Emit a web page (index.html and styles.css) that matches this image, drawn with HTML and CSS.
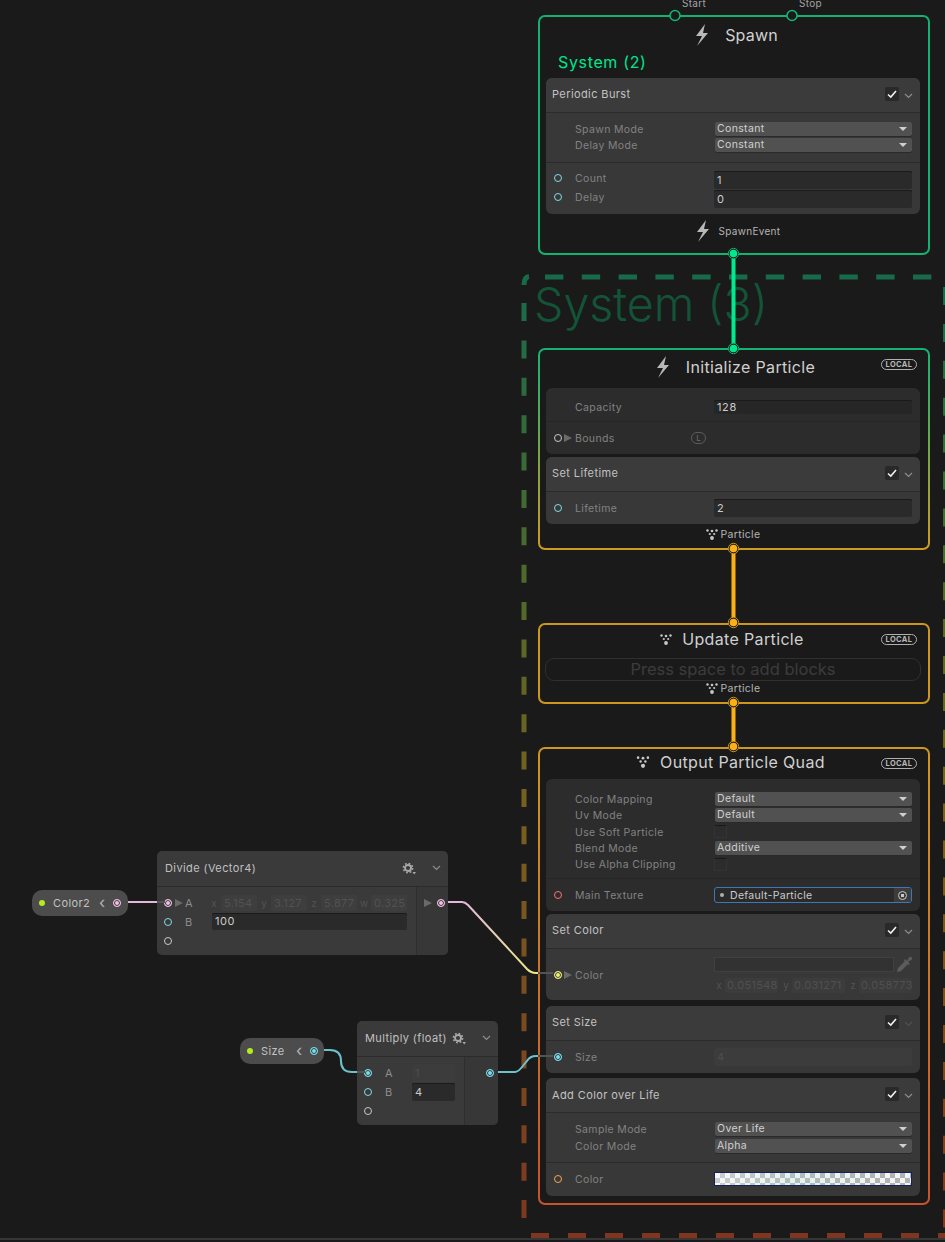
FILE: index.html
```html
<!DOCTYPE html>
<html lang="en">
<head>
    <meta charset="UTF-8">
    <meta name="viewport" content="width=device-width, initial-scale=1.0">
    <title>VFX Graph</title>
    <link rel="stylesheet" href="styles.css">
</head>
<body>
<svg class="defs">
    <symbol id="bolt" viewBox="0 0 13 22"><polygon points="10,0 1,12 7,12 2,22 13,9 8,9"/></symbol>
    <symbol id="dots" viewBox="0 0 12 11"><circle cx="1.5" cy="1.5" r="1.2"/><circle cx="6" cy="2" r="1.3"/><circle cx="10.5" cy="1.5" r="1.2"/><circle cx="3.8" cy="5" r="1.1"/><circle cx="8.2" cy="5" r="1.1"/><circle cx="6" cy="9" r="1.9"/></symbol>
    <symbol id="tick" viewBox="0 0 14 14"><path d="M3 7.5 L5.8 10 L11 4" fill="none" stroke="#f0f0f0" stroke-width="1.6"/></symbol>
    <symbol id="chev" viewBox="0 0 9 6"><path d="M1 1 L4.5 4.5 L8 1" fill="none" stroke="currentColor" stroke-width="1.2"/></symbol>
    <symbol id="gear" viewBox="0 0 14 13"><circle cx="6" cy="6" r="4.6" fill="none" stroke="#a8a8a8" stroke-width="1.6" stroke-dasharray="1.8 1.8"/><circle cx="6" cy="6" r="3" fill="none" stroke="#a8a8a8" stroke-width="1.9"/><polygon points="10.5,10 14,10 12.2,12.5" fill="#a8a8a8"/></symbol>
</svg>

<div class="graph">
    <!-- system frame and links -->
    <svg class="layer" width="945" height="1242">
        <defs>
            <linearGradient id="frame" gradientUnits="userSpaceOnUse" x1="0" y1="278" x2="0" y2="1236">
                <stop offset="0" stop-color="#176b4b"/>
                <stop offset="0.3" stop-color="#4c6a2c"/>
                <stop offset="0.55" stop-color="#77601f"/>
                <stop offset="1" stop-color="#7e3620"/>
            </linearGradient>
            <linearGradient id="pinkyellow" gradientUnits="userSpaceOnUse" x1="0" y1="902" x2="0" y2="973">
                <stop offset="0" stop-color="#e2b9d8"/>
                <stop offset="1" stop-color="#e9e88a"/>
            </linearGradient>
        </defs>
        <path class="dash" d="M545 277 H945"/>
        <path class="dash left" d="M524 303 V1220"/>
        <path class="dash right" d="M945.5 287 V1238"/>
        <path class="dash bottom" d="M531 1235.5 H945"/>
        <path class="corner" d="M524 285 Q524 277 529 276.5"/>
        <path class="wire pink" d="M125 902 H157"/>
        <path class="wire blend" d="M448 902 H462 Q465 902 468 905 L527 969 Q531 973 536 973 H538"/>
        <path class="wire teal" d="M322 1050 H330 Q341 1050 341 1061 Q341 1072 352 1072 H357"/>
        <path class="wire teal" d="M498 1072 H515 Q518 1072 522 1067 L527 1061 Q530 1056 536 1056 H538"/>
    </svg>
    <div class="sys-big">System (3)</div>

    <!-- left side operators -->
    <div class="pill pill-color">
        <span class="led"></span><span class="pill-name">Color2</span><span class="back">‹</span><span class="port pink on"></span>
    </div>
    <div class="pill pill-size">
        <span class="led"></span><span class="pill-name">Size</span><span class="back">‹</span><span class="port cyan on"></span>
    </div>

    <div class="node node-divide">
        <div class="node-head">
            <span class="node-title">Divide (Vector4)</span>
            <svg class="gear"><use href="#gear"/></svg>
            <svg class="chev"><use href="#chev"/></svg>
        </div>
        <div class="node-body">
            <div class="node-in divide-in">
                <div class="node-row"><span class="port pink on"></span><span class="caret"></span><span class="node-label">A</span>
                    <span class="vec">
                        <span class="vk">x</span><span class="vf">5.154</span>
                        <span class="vk">y</span><span class="vf">3.127</span>
                        <span class="vk">z</span><span class="vf">5.877</span>
                        <span class="vk">w</span><span class="vf">0.325</span>
                    </span>
                </div>
                <div class="node-row"><span class="port cyan"></span><span class="no-caret"></span><span class="node-label">B</span><span class="input wide">100</span></div>
                <div class="node-row"><span class="port grey"></span></div>
            </div>
            <div class="node-out">
                <div class="node-row out-row"><span class="caret"></span><span class="port pink on"></span></div>
            </div>
        </div>
    </div>

    <div class="node node-multiply">
        <div class="node-head">
            <span class="node-title">Multiply (float)</span>
            <svg class="gear"><use href="#gear"/></svg>
            <svg class="chev"><use href="#chev"/></svg>
        </div>
        <div class="node-body">
            <div class="node-in multiply-in">
                <div class="node-row"><span class="port cyan on"></span><span class="no-caret"></span><span class="node-label">A</span><span class="input small off">1</span></div>
                <div class="node-row"><span class="port cyan"></span><span class="no-caret"></span><span class="node-label">B</span><span class="input small">4</span></div>
                <div class="node-row"><span class="port grey"></span></div>
            </div>
            <div class="node-out">
                <div class="node-row out-row out-plain"><span class="port cyan on"></span></div>
            </div>
        </div>
    </div>

    <!-- Spawn -->
    <div class="context ctx-spawn">
        <span class="flow-name flow-start">Start</span>
        <span class="flow-name flow-stop">Stop</span>
        <div class="ctx-title title-spawn"><svg class="bolt"><use href="#bolt"/></svg><span>Spawn</span></div>
        <div class="sys-small">System (2)</div>
        <div class="block">
            <div class="block-head"><span class="block-name">Periodic Burst</span><svg class="check"><use href="#tick"/></svg><svg class="chev"><use href="#chev"/></svg></div>
            <div class="settings spawn-settings">
                <div class="row row-set"><span class="label">Spawn Mode</span><span class="select">Constant</span></div>
                <div class="row row-set"><span class="label">Delay Mode</span><span class="select">Constant</span></div>
            </div>
            <div class="props spawn-props">
                <div class="row row-tall"><span class="port cyan"></span><span class="label">Count</span><span class="input">1</span></div>
                <div class="row row-tall"><span class="port cyan"></span><span class="label">Delay</span><span class="input">0</span></div>
            </div>
        </div>
        <div class="ctx-foot foot-spawn"><svg class="bolt"><use href="#bolt"/></svg><span>SpawnEvent</span></div>
    </div>

    <!-- Initialize -->
    <div class="context ctx-init">
        <span class="local">LOCAL</span>
        <div class="ctx-title title-init"><svg class="bolt"><use href="#bolt"/></svg><span>Initialize Particle</span></div>
        <div class="block block-dark">
            <div class="row row-capacity"><span class="label plain">Capacity</span><span class="input thin">128</span></div>
            <div class="row row-bounds"><span class="port grey"></span><span class="caret"></span><span class="label short">Bounds</span><span class="l-badge">L</span></div>
        </div>
        <div class="block">
            <div class="block-head"><span class="block-name">Set Lifetime</span><svg class="check"><use href="#tick"/></svg><svg class="chev"><use href="#chev"/></svg></div>
            <div class="props life-props">
                <div class="row row-life"><span class="port cyan"></span><span class="label">Lifetime</span><span class="input">2</span></div>
            </div>
        </div>
        <div class="ctx-foot foot-particle"><svg class="dots"><use href="#dots"/></svg><span>Particle</span></div>
    </div>

    <!-- Update -->
    <div class="context ctx-update">
        <span class="local">LOCAL</span>
        <div class="ctx-title title-update"><svg class="dots"><use href="#dots"/></svg><span>Update Particle</span></div>
        <div class="empty-block">Press space to add blocks</div>
        <div class="ctx-foot foot-particle"><svg class="dots"><use href="#dots"/></svg><span>Particle</span></div>
    </div>

    <!-- Output -->
    <div class="context ctx-output">
        <span class="local">LOCAL</span>
        <div class="ctx-title title-output"><svg class="dots"><use href="#dots"/></svg><span>Output Particle Quad</span></div>
        <div class="block block-dark">
            <div class="output-settings">
                <div class="row row-out"><span class="label">Color Mapping</span><span class="select">Default</span></div>
                <div class="row row-out"><span class="label">Uv Mode</span><span class="select">Default</span></div>
                <div class="row row-out"><span class="label">Use Soft Particle</span><span class="tickbox"></span></div>
                <div class="row row-out"><span class="label">Blend Mode</span><span class="select">Additive</span></div>
                <div class="row row-out"><span class="label">Use Alpha Clipping</span><span class="tickbox"></span></div>
            </div>
            <div class="row row-texture">
                <span class="port red"></span><span class="label">Main Texture</span>
                <span class="texture"><span class="tex-dot"></span><span class="tex-name">Default-Particle</span><span class="tex-pick"><span class="tex-ring"></span></span></span>
            </div>
        </div>
        <div class="block">
            <div class="block-head"><span class="block-name">Set Color</span><svg class="check"><use href="#tick"/></svg><svg class="chev"><use href="#chev"/></svg></div>
            <div class="props color-props">
                <div class="row row-color">
                    <span class="port yellow on"></span><span class="caret"></span><span class="label short-color">Color</span>
                    <div class="color-fields">
                        <div class="swatch-line">
                            <span class="swatch"></span>
                            <svg class="dropper" viewBox="0 0 16 17"><path d="M1 16 L2 12 L9 5 L12 8 L5 15 Z M9 3 L11 5 L13 1.5 Q15 0 16 2 Q16.500 3.500 15 4 L12 6 L14 8 L12.500 9 L8 4.500 Z" fill="#5c5c5c"/></svg>
                        </div>
                        <div class="vec3">
                            <span class="vk">x</span><span class="vf">0.051548</span>
                            <span class="vk">y</span><span class="vf">0.031271</span>
                            <span class="vk">z</span><span class="vf">0.058773</span>
                        </div>
                    </div>
                </div>
            </div>
        </div>
        <div class="block block-size">
            <div class="block-head"><span class="block-name">Set Size</span><svg class="check"><use href="#tick"/></svg><svg class="chev dim"><use href="#chev"/></svg></div>
            <div class="props size-props">
                <div class="row row-size"><span class="port cyan on"></span><span class="label">Size</span><span class="input off">4</span></div>
            </div>
        </div>
        <div class="block block-life">
            <div class="block-head"><span class="block-name">Add Color over Life</span><svg class="check"><use href="#tick"/></svg><svg class="chev"><use href="#chev"/></svg></div>
            <div class="settings spawn-settings">
                <div class="row row-set"><span class="label">Sample Mode</span><span class="select">Over Life</span></div>
                <div class="row row-set"><span class="label">Color Mode</span><span class="select">Alpha</span></div>
            </div>
            <div class="props gradient-props">
                <div class="row row-size"><span class="port orange"></span><span class="label">Color</span><span class="gradient"></span></div>
            </div>
        </div>
    </div>

    <!-- flow links and their anchors sit on top of the context borders -->
    <svg class="layer" width="945" height="1242">
        <path class="dim" d="M157 902 H165"/>
        <path class="dim" d="M357 1072 H365"/>
        <path class="dim" d="M538 973 H553"/>
        <path class="dim" d="M538 1056 H553"/>
        <path class="flow green" d="M733.500 254 V348"/>
        <path class="flow amber" d="M733.500 549 V622"/>
        <path class="flow amber" d="M733.500 703 V746"/>
        <circle class="hole" cx="675" cy="15.500" r="5"/>
        <circle class="hole" cx="792" cy="15.500" r="5"/>
        <g class="green-a"><circle class="ring" cx="733.500" cy="253.500" r="5.200"/><circle cx="733.500" cy="253.500" r="3.800"/></g>
        <g class="green-a"><circle class="ring" cx="733.500" cy="348.500" r="5.200"/><circle cx="733.500" cy="348.500" r="3.800"/></g>
        <g class="amber-a"><circle class="ring" cx="733.500" cy="548.500" r="5.200"/><circle cx="733.500" cy="548.500" r="3.800"/></g>
        <g class="amber-a"><circle class="ring" cx="733.500" cy="622.500" r="5.200"/><circle cx="733.500" cy="622.500" r="3.800"/></g>
        <g class="amber-a"><circle class="ring" cx="733.500" cy="702.500" r="5.200"/><circle cx="733.500" cy="702.500" r="3.800"/></g>
        <g class="amber-a"><circle class="ring" cx="733.500" cy="746.500" r="5.200"/><circle cx="733.500" cy="746.500" r="3.800"/></g>
    </svg>

    <div class="status-line"></div>
</div>
</body>
</html>
```

FILE: styles.css
```css
* {
    box-sizing: border-box;
}

body {
    margin: 0;
    background-color: #1a1a1a;
    font-family: Inter, "Noto Sans", sans-serif;
    font-size: 11px;
    color: #c4c4c4;
}

.defs {
    display: none;
}

.graph {
    position: relative;
    width: 945px;
    height: 1242px;
    overflow: hidden;
    background-color: #1a1a1a;
}

.layer {
    position: absolute;
    left: 0;
    top: 0;
    z-index: 1;
    pointer-events: none;
}

.layer:last-of-type {
    z-index: 5;
}

.status-line {
    position: absolute;
    left: 0;
    top: 1238px;
    width: 945px;
    height: 2px;
    background-color: #363636;
    z-index: 6;
}

/* frame */
.dash {
    fill: none;
    stroke: #176b4b;
    stroke-width: 5;
    stroke-dasharray: 18.400 18.400;
}

.dash.left {
    stroke: url(#frame);
    stroke-dasharray: 18 19.375;
}

.dash.right {
    stroke: url(#frame);
    stroke-dasharray: 18 18.900;
}

.dash.bottom {
    stroke: #7e3620;
    stroke-dasharray: 18 19;
}

.corner {
    fill: none;
    stroke: #176b4b;
    stroke-width: 5;
}

.sys-big {
    position: absolute;
    left: 534px;
    top: 277px;
    font-size: 46.500px;
    line-height: 54px;
    font-weight: 300;
    color: #135439;
    z-index: 2;
}

/* links */
.wire {
    fill: none;
    stroke-width: 2;
}

.wire.pink {
    stroke: #e2b9d8;
}

.wire.blend {
    stroke: url(#pinkyellow);
}

.wire.teal {
    stroke: #6cc3cc;
}

.dim {
    fill: none;
    stroke: #4f5553;
    stroke-width: 2;
}

.flow {
    fill: none;
    stroke-width: 4;
}

.flow.green {
    stroke: #00ea8c;
}

.flow.amber {
    stroke: #fcb017;
}

.hole {
    fill: #1a1a1a;
    stroke: #12b876;
    stroke-width: 1.500;
}

.green-a circle {
    fill: #00ea8c;
}

.amber-a circle {
    fill: #fcb017;
}

.green-a .ring {
    fill: #1a1a1a;
    stroke: #10b070;
}

.amber-a .ring {
    fill: #1a1a1a;
    stroke: #c9921c;
}

/* ports */
.port {
    flex: none;
    width: 8px;
    height: 8px;
    border-radius: 50%;
    border: 1.500px solid #cfcfcf;
    background-color: transparent;
}

.port.cyan { border-color: #7fdcea; }
.port.pink { border-color: #eec3e4; }
.port.yellow { border-color: #eef07f; }
.port.red { border-color: #ff6f7a; }
.port.orange { border-color: #f6a352; }
.port.grey { border-color: #c8c8c8; }

.port.on.cyan { background: #7fdcea; box-shadow: inset 0 0 0 1px #24383c; }
.port.on.pink { background: #eec3e4; box-shadow: inset 0 0 0 1px #3a2d38; }
.port.on.yellow { background: #eef07f; box-shadow: inset 0 0 0 1px #3a3a24; }

.caret {
    flex: none;
    width: 0;
    height: 0;
    border-style: solid;
    border-width: 4px 0 4px 8px;
    border-color: transparent transparent transparent #6a6a6a;
}

.chev {
    flex: none;
    width: 9px;
    height: 6px;
    color: #8c8c8c;
}

.chev.dim {
    color: #505050;
}

/* parameter pills */
.pill {
    position: absolute;
    z-index: 3;
    display: flex;
    align-items: center;
    height: 26px;
    border-radius: 10px;
    background-color: #4c4c4c;
    color: #c2c2c2;
}

.pill-color {
    left: 32px;
    top: 890px;
    width: 96px;
}

.pill-size {
    left: 240px;
    top: 1038px;
    width: 84px;
}

.led {
    flex: none;
    width: 6px;
    height: 6px;
    margin-left: 7px;
    margin-right: 8px;
    border-radius: 50%;
    background-color: #b4ec1e;
}

.pill-name {
    padding-bottom: 1px;
    letter-spacing: 0.4px;
}

.pill-color .pill-name {
    width: 45px;
}

.pill-size .pill-name {
    width: 34px;
}

.back {
    width: 15px;
    font-size: 16px;
    line-height: 20px;
    margin-top: -3px;
    padding-left: 1px;
    color: #b4b4b4;
}

/* operators */
.node {
    position: absolute;
    z-index: 3;
    border-radius: 5px;
    background-color: #3a3a3a;
    overflow: hidden;
}

.node-divide {
    left: 157px;
    top: 851px;
    width: 291px;
    height: 104px;
}

.node-multiply {
    left: 357px;
    top: 1021px;
    width: 141px;
    height: 104px;
}

.node-head {
    display: flex;
    align-items: center;
    height: 36px;
    padding: 0 7px 1px 8px;
    border-bottom: 1px solid #2b2b2b;
}

.node-title {
    flex: 1;
    letter-spacing: 0.4px;
    color: #c0c0c0;
}

.gear {
    width: 14px;
    height: 13px;
    margin-right: 16px;
}

.node-body {
    display: flex;
    height: 68px;
}

.node-in {
    padding-top: 6px;
}

.divide-in {
    width: 259px;
}

.multiply-in {
    width: 107px;
}

.node-out {
    flex: 1;
    padding-top: 6px;
    border-left: 1px solid #2e2e2e;
    background-color: #373737;
}

.node-row {
    display: flex;
    align-items: center;
    height: 19px;
    padding-left: 7px;
}

.node-row .port {
    margin-right: 3px;
}

.node-row .no-caret {
    flex: none;
    width: 8px;
}

.node-label {
    width: 27px;
    margin-left: 2px;
    color: #8c8c8c;
}

.out-row .caret {
    margin-right: 5px;
}

.out-plain {
    padding-left: 21px;
}

.vec {
    display: flex;
    align-items: center;
    flex: none;
    width: 200px;
    margin-left: -5px;
}

.vk {
    flex: none;
    width: 10px;
    color: #525252;
    font-size: 10px;
    text-align: center;
}

.vec .vk {
    width: 14px;
}

.vf {
    flex: 1;
    height: 16px;
    padding-left: 3px;
    line-height: 16px;
    overflow: hidden;
    white-space: nowrap;
    border-radius: 2px;
    background-color: #3e3e3e;
    color: #525252;
    letter-spacing: 0.3px;
}

/* contexts */
.context {
    position: absolute;
    z-index: 3;
    left: 538px;
    width: 392px;
    padding: 0 8px 0 6px;
    border: 2px solid transparent;
    border-radius: 7px;
}

.ctx-spawn {
    top: 15px;
    height: 240px;
    background: linear-gradient(#1a1a1a, #1a1a1a) padding-box, #14b272 border-box;
}

.ctx-init {
    top: 348px;
    height: 202px;
    background: linear-gradient(#1a1a1a, #1a1a1a) padding-box, linear-gradient(#12b474, #d09a1f) border-box;
}

.ctx-update {
    top: 623px;
    height: 81px;
    background: linear-gradient(#1a1a1a, #1a1a1a) padding-box, #cc961f border-box;
}

.ctx-output {
    top: 747px;
    height: 458px;
    background: linear-gradient(#1a1a1a, #1a1a1a) padding-box, linear-gradient(#d0961f, #c9522b) border-box;
}

.flow-name {
    position: absolute;
    top: -17px;
    font-size: 10px;
    line-height: 6px;
    letter-spacing: 0.3px;
    color: #a4a4a4;
}

.flow-start {
    left: 142px;
}

.flow-stop {
    left: 259px;
}

.local {
    position: absolute;
    right: 11px;
    top: 9px;
    width: 36px;
    height: 11px;
    border: 1px solid #b0b0b0;
    border-radius: 6px;
    font-size: 7.500px;
    font-weight: 700;
    line-height: 9px;
    letter-spacing: 0.4px;
    text-align: center;
    color: #b8b8b8;
}

.ctx-title {
    display: flex;
    align-items: center;
    justify-content: center;
    font-size: 16px;
    font-weight: 400;
    letter-spacing: 0.35px;
    color: #d0d0d0;
}

.title-spawn {
    height: 36px;
    gap: 17px;
    padding-left: 7px;
    letter-spacing: 0.2px;
}

.title-init {
    height: 38px;
    gap: 17px;
    padding-left: 5px;
    padding-bottom: 4px;
}

.title-update {
    height: 28px;
    gap: 10px;
    margin-right: 2px;
}

.title-output {
    height: 30px;
    gap: 10px;
    padding-right: 5px;
    padding-bottom: 4px;
}

.bolt {
    flex: none;
    width: 13px;
    height: 22px;
    fill: #b9b9b9;
}

.dots {
    flex: none;
    width: 12px;
    height: 11px;
    fill: #c8c8c8;
}

.title-output .dots {
    width: 14px;
    height: 12px;
}

.sys-small {
    height: 25px;
    padding-left: 12px;
    font-size: 16px;
    line-height: 18px;
    letter-spacing: 0.65px;
    color: #00e68a;
}

.ctx-foot {
    display: flex;
    align-items: center;
    justify-content: center;
    font-size: 10px;
    letter-spacing: 0.3px;
    color: #b4b4b4;
}

.foot-spawn {
    height: 28px;
    gap: 10px;
    padding-left: 10px;
}

.foot-particle {
    height: 15px;
    gap: 3px;
    font-size: 10.500px;
}

/* blocks */
.block {
    margin-bottom: 3px;
    border-radius: 6px;
    background-color: #383838;
    overflow: hidden;
}

.block-dark {
    background-color: #2c2c2c;
}

.block-size {
    margin-top: 6px;
}

.block-life {
    margin-top: 5px;
}

.block-head {
    display: flex;
    align-items: center;
    height: 35px;
    padding: 0 7px 2px 6px;
    background-color: #3b3b3b;
    border-bottom: 1px solid #2b2b2b;
}

.block-head .chev {
    margin-top: 3px;
}

.block-name {
    flex: 1;
    letter-spacing: 0.4px;
    color: #c2c2c2;
}

.block-life .block-name {
    padding-top: 2px;
}

.check {
    flex: none;
    width: 14px;
    height: 14px;
    margin-right: 5px;
    border-radius: 2px;
    background-color: #292929;
}

.settings {
    padding-top: 8px;
    border-bottom: 1px solid #2b2b2b;
}

.block-life .settings {
    padding-top: 7px;
}

.spawn-settings {
    height: 50px;
}

.spawn-props {
    height: 51px;
    padding-top: 7px;
}

.life-props {
    height: 32px;
}

.color-props {
    height: 51px;
}

.size-props {
    height: 32px;
}

.gradient-props {
    height: 33px;
}

/* rows */
.row {
    display: flex;
    align-items: center;
    padding-left: 8px;
}

.row > .port {
    margin-right: 13px;
}

.row > .label:first-child {
    margin-left: 21px;
}

.row-set {
    height: 16px;
}

.block-life .row-set {
    height: 17px;
}

.row-tall {
    height: 19px;
}

.row-tall > .port,
.row-tall > .label {
    margin-top: -3px;
}

.row-life {
    height: 31px;
}

.row-capacity {
    height: 34px;
    padding-top: 4px;
    border-bottom: 1px solid #262626;
}

.row-bounds {
    height: 32px;
}

.row-bounds > .port,
.row-color > .port {
    margin-right: 2px;
}

.row-bounds .caret,
.row-color .caret {
    margin-right: 3px;
}

.row-out {
    height: 16.250px;
}

.output-settings {
    height: 100px;
    padding-top: 12px;
    border-bottom: 1px solid #262626;
}

.row-texture {
    height: 32px;
}

.row-color {
    height: 51px;
}

.row-size {
    height: 31px;
}

.label {
    flex: none;
    width: 139px;
    padding-top: 1px;
    letter-spacing: 0.35px;
    color: #828282;
    font-size: 10.500px;
}

.short {
    width: 116px;
}

.short-color {
    width: 139px;
}

.l-badge {
    width: 15px;
    height: 12px;
    border: 1px solid #5c5c5c;
    border-radius: 6px;
    font-size: 8px;
    line-height: 10px;
    text-align: center;
    color: #6c6c6c;
}

/* fields */
.select {
    position: relative;
    flex: none;
    width: 197px;
    height: 14px;
    margin-left: 1px;
    padding-left: 2px;
    line-height: 13px;
    border-radius: 2px;
    background-color: #515151;
    box-shadow: 0 1px 0 #2a2a2a;
    letter-spacing: 0.35px;
    font-size: 10.500px;
    color: #d0d0d0;
}

.select::after {
    content: "";
    position: absolute;
    right: 5px;
    top: 5px;
    border-style: solid;
    border-width: 4px 4px 0 4px;
    border-color: #cfcfcf transparent transparent transparent;
}

.input {
    flex: none;
    width: 198px;
    height: 18px;
    padding-left: 3px;
    line-height: 18px;
    border-radius: 2px;
    background-color: #2a2a2a;
    box-shadow: inset 0 1px 0 #1a1a1a;
    letter-spacing: 0.6px;
    color: #cccccc;
}

.input.thin {
    height: 14px;
    line-height: 15px;
    background-color: #262626;
}

.input.wide {
    width: 195px;
    height: 17px;
    line-height: 17px;
}

.input.small {
    width: 43px;
    height: 18px;
}

.input.off {
    background-color: #3c3c3c;
    box-shadow: none;
    color: #4e4e4e;
}

.tickbox {
    flex: none;
    width: 13px;
    height: 13px;
    background-color: #2c2c2c;
    border: 1px solid #333;
    border-top-color: #191919;
}

.texture {
    display: flex;
    align-items: center;
    flex: none;
    width: 198px;
    height: 16px;
    border: 1px solid #3d78b5;
    border-radius: 3px;
    background-color: #2a2a2a;
    color: #cccccc;
    font-size: 10.500px;
    letter-spacing: 0.3px;
    overflow: hidden;
}

.tex-dot {
    flex: none;
    width: 4px;
    height: 4px;
    margin: 0 6px 0 5px;
    border-radius: 50%;
    background-color: #b0b0b0;
}

.tex-name {
    flex: 1;
}

.tex-pick {
    display: flex;
    align-items: center;
    justify-content: center;
    width: 17px;
    height: 14px;
    background-color: #3c3c3c;
}

.tex-ring {
    width: 9px;
    height: 9px;
    border-radius: 50%;
    border: 1px solid #c8c8c8;
    background: radial-gradient(circle, #c8c8c8 0 1.500px, transparent 2px);
}

.color-fields {
    flex: none;
    width: 198px;
}

.swatch-line {
    display: flex;
    align-items: center;
    height: 16px;
}

.swatch {
    width: 180px;
    height: 15px;
    border: 1px solid #404040;
    background-color: #323232;
}

.dropper {
    width: 16px;
    height: 17px;
    margin-left: 2px;
}

.vec3 {
    display: flex;
    align-items: center;
    height: 16px;
    margin-top: 5px;
    font-size: 11px;
}

.vec3 .vf {
    height: 15px;
    line-height: 15px;
    margin-left: 1px;
    margin-right: 3px;
    padding-left: 2px;
    background-color: #3c3c3c;
    color: #505050;
    letter-spacing: 0.3px;
}

.vec3 .vf:last-child {
    margin-right: 0;
}

.gradient {
    flex: none;
    width: 198px;
    height: 14px;
    border: 1px solid #16205c;
    background:
        linear-gradient(90deg, rgba(255, 255, 255, 0.35), rgba(170, 235, 230, 0.2) 40%, rgba(255, 255, 255, 0) 85%),
        conic-gradient(#b2b2b2 25%, #f2f6f6 0 50%, #b2b2b2 0 75%, #f2f6f6 0) 0 0 / 10px 10px;
}

/* empty context */
.empty-block {
    height: 23px;
    margin: 5px -1px 0 -1px;
    border: 1px solid #303030;
    border-radius: 9px;
    font-size: 16.500px;
    line-height: 21px;
    text-align: center;
    color: #3c3c3c;
}
```
